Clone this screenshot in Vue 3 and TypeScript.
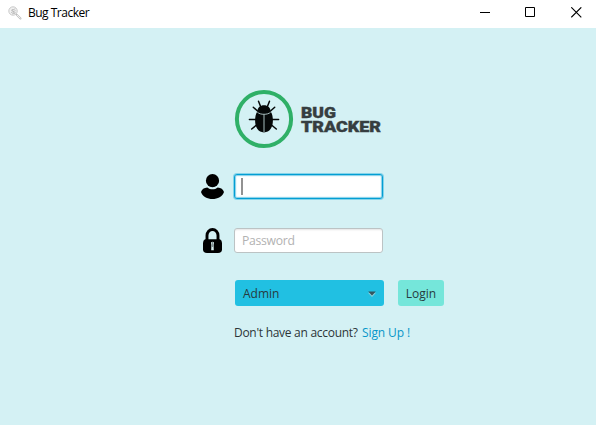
<script setup lang="ts">
import { ref } from 'vue'

const username = ref('')
const password = ref('')
const role = ref('Admin')
</script>

<template>
  <div class="window">
    <header class="titlebar">
      <svg class="app-icon" width="14" height="14" viewBox="0 0 14 14">
        <circle cx="5" cy="5" r="4.200" fill="#f1f1f1" stroke="#cacaca" stroke-width="1" />
        <path d="M3.200 4.600l4-1.800M3 6.600l4.600-2M4 8l3.600-1.500M4 3l2.500 5" stroke="#b4b4b4" stroke-width=".8" fill="none" />
        <path d="M8.600 8.600l3.900 3.900" stroke="#bebebe" stroke-width="2" stroke-linecap="round" />
        <path d="M9 9l3.400 3.400" stroke="#f4f4f4" stroke-width=".9" />
      </svg>
      <span class="title">Bug Tracker</span>
      <div class="controls">
        <svg width="11" height="11" viewBox="0 0 11 11"><path d="M0 5.500h10" stroke="#000" /></svg>
        <svg width="11" height="11" viewBox="0 0 11 11"><path d="M.5 .5h9v9h-9z" stroke="#000" fill="none" /></svg>
        <svg class="close" width="11" height="11" viewBox="0 0 11 11"><path d="M.3 .3l10 10M10.300 .3l-10 10" stroke="#000" stroke-width="1.100" /></svg>
      </div>
    </header>

    <main class="content">
      <svg class="logo" width="150" height="60" viewBox="0 0 150 60">
        <circle cx="30" cy="30" r="27.100" fill="none" stroke="#2fb067" stroke-width="4" />
        <g fill="none" stroke="#050808" stroke-width="1.500" stroke-linecap="round" stroke-linejoin="round">
          <path d="M26.500 17.200l-2-5M33.500 17.200l2-5" />
          <path d="M24 22.500l-4.700-4.300M36 22.500l4.700-4.300" />
          <path d="M22 30.500h-6.600M38 30.500h6.600" />
          <path d="M22.500 36l-4.800 4M37.500 36l4.800 4" />
        </g>
        <path d="M23.300 22.500c.3-4 3-6.200 6.700-6.200s6.400 2.200 6.700 6.200c1.700 2.600 2.200 5.800 2.200 9.100 0 7-3.200 11.800-8.900 11.800s-8.900-4.800-8.900-11.800c0-3.300.5-6.500 2.200-9.100z" fill="#050808" />
        <path d="M23.300 23.100c1.500 1.600 4.200 2.200 6.700 2.200s5.200-.6 6.700-2.200M30 25.300v18.200" fill="none" stroke="#a6bcbc" stroke-width="1" />
        <g class="wordmark">
          <text x="67" y="29" textLength="35" lengthAdjust="spacingAndGlyphs">BUG</text>
          <text x="67" y="43.200" textLength="80" lengthAdjust="spacingAndGlyphs">TRACKER</text>
        </g>
      </svg>

      <form class="form" @submit.prevent>
        <label class="row user-row">
          <svg width="24" height="26" viewBox="0 0 24 26">
            <circle cx="11.500" cy="6.700" r="6.600" />
            <path d="M6.300 13.400c3 2.600 7.400 2.600 10.400 0 3.400 .4 5.400 1.700 6.300 4.600-1.300 4.500-6.500 7.100-11.500 7.100S1.300 22.500 0 18c.9-2.900 2.900-4.200 6.300-4.600z" />
          </svg>
          <span class="field focused">
            <input v-model="username" type="text" aria-label="Username" />
            <i class="caret"></i>
          </span>
        </label>

        <label class="row pass-row">
          <svg width="24" height="26" viewBox="0 0 24 26">
            <path d="M6 13V7.500a5.500 6 0 0 1 11 0V13" fill="none" stroke="#000" stroke-width="2.900" />
            <path d="M4 11.200h15q2 1 2 3.800v6.200q0 3.800-4 3.800H6q-4 0-4-3.800V15q0-2.800 2-3.800z" />
            <path d="M10 14.500q1.500-1.300 3 0l-.4 2.500 .2 5.200h-2.600l.2-5.200z" fill="#dcf2f3" />
            <path d="M11.500 14v5" stroke="#5b696a" stroke-width=".7" />
          </svg>
          <span class="field">
            <input v-model="password" type="password" placeholder="Password" />
          </span>
        </label>

        <div class="actions">
          <button type="button" class="combo">
            <span class="role">{{ role }}</span>
            <svg width="8" height="6" viewBox="0 0 8 6">
              <path d="M0 1.700h8L4 6z" fill="#8ccfda" />
              <path d="M.2 .5h7.600L4 4.600z" fill="#33565f" />
            </svg>
          </button>
          <button type="submit" class="login"><span>Login</span></button>
        </div>

        <p class="signup"><span class="question">Don't have an account?</span><a>Sign Up !</a></p>
      </form>
    </main>
  </div>
</template>

<style>
body {
  margin: 0;
  overflow: hidden;
}
</style>

<style scoped>
.window {
  display: flex;
  flex-direction: column;
  height: 425px;
  background: #d4f1f4;
  font: 12px/16px "Open Sans", "Noto Sans", sans-serif;
  color: #2c3538;
}
.titlebar {
  display: flex;
  align-items: center;
  box-sizing: border-box;
  height: 28px;
  padding: 0 14px 3px 8px;
  background: #fff;
  color: #000;
}
.title {
  margin: 1px 0 0 6px;
  letter-spacing: -0.5px;
}
.controls {
  display: flex;
  gap: 34px;
  margin-left: auto;
}
.controls .close {
  margin-left: 1px;
}
.controls svg,
.logo,
.row svg,
.app-icon {
  display: block;
  flex: none;
}
.content {
  padding: 61px 0 0 201px;
}
.logo {
  margin-left: 33px;
}
.wordmark text {
  font: 900 15px Roboto, Inter, sans-serif;
  fill: #363e40;
  stroke: #363e40;
  stroke-width: .4px;
}
.form {
  padding-top: 25px;
}
.row {
  display: flex;
  gap: 9px;
  height: 26px;
}
.pass-row {
  margin-top: 28px;
}
.field {
  position: relative;
  box-sizing: border-box;
  width: 149px;
  height: 25px;
  border: 1px solid #bcc3c4;
  border-radius: 3px;
  background: #fff;
  box-shadow: inset 0 2px 2px -1px #e4e4e4;
}
.field.focused {
  border-color: #039ed3;
  box-shadow: 0 0 0 1px #85d4ea, inset 0 0 0 1px #8fd4eb, inset 0 0 0 2px #eef9fc;
}
.field input {
  display: block;
  box-sizing: border-box;
  width: 100%;
  height: 100%;
  padding: 0 7px;
  border: 0;
  outline: 0;
  background: transparent;
  font: inherit;
  font-size: 12.200px;
  letter-spacing: -0.3px;
}
.field input::placeholder {
  color: #b2b2b2;
  opacity: 1;
}
.caret {
  position: absolute;
  left: 6px;
  top: 3px;
  width: 2px;
  height: 17px;
  background: #929292;
}
.actions {
  display: flex;
  gap: 14px;
  margin: 26px 0 0 34px;
}
.actions button {
  box-sizing: border-box;
  height: 26px;
  border: 0;
  border-radius: 3px;
  font: inherit;
  color: #273b40;
}
.combo {
  display: flex;
  align-items: center;
  justify-content: space-between;
  width: 149px;
  padding: 1px 8px 0;
  background: #21c0e2;
}
.login {
  width: 46px;
  padding: 1px 0 0;
  background: #75e6da;
}
.signup {
  display: flex;
  gap: 4px;
  margin: 19px 0 0 33px;
}
.question {
  width: 124px;
  white-space: nowrap;
  letter-spacing: -0.28px;
}
.signup a {
  color: #0796c9;
  letter-spacing: -0.1px;
}
</style>
